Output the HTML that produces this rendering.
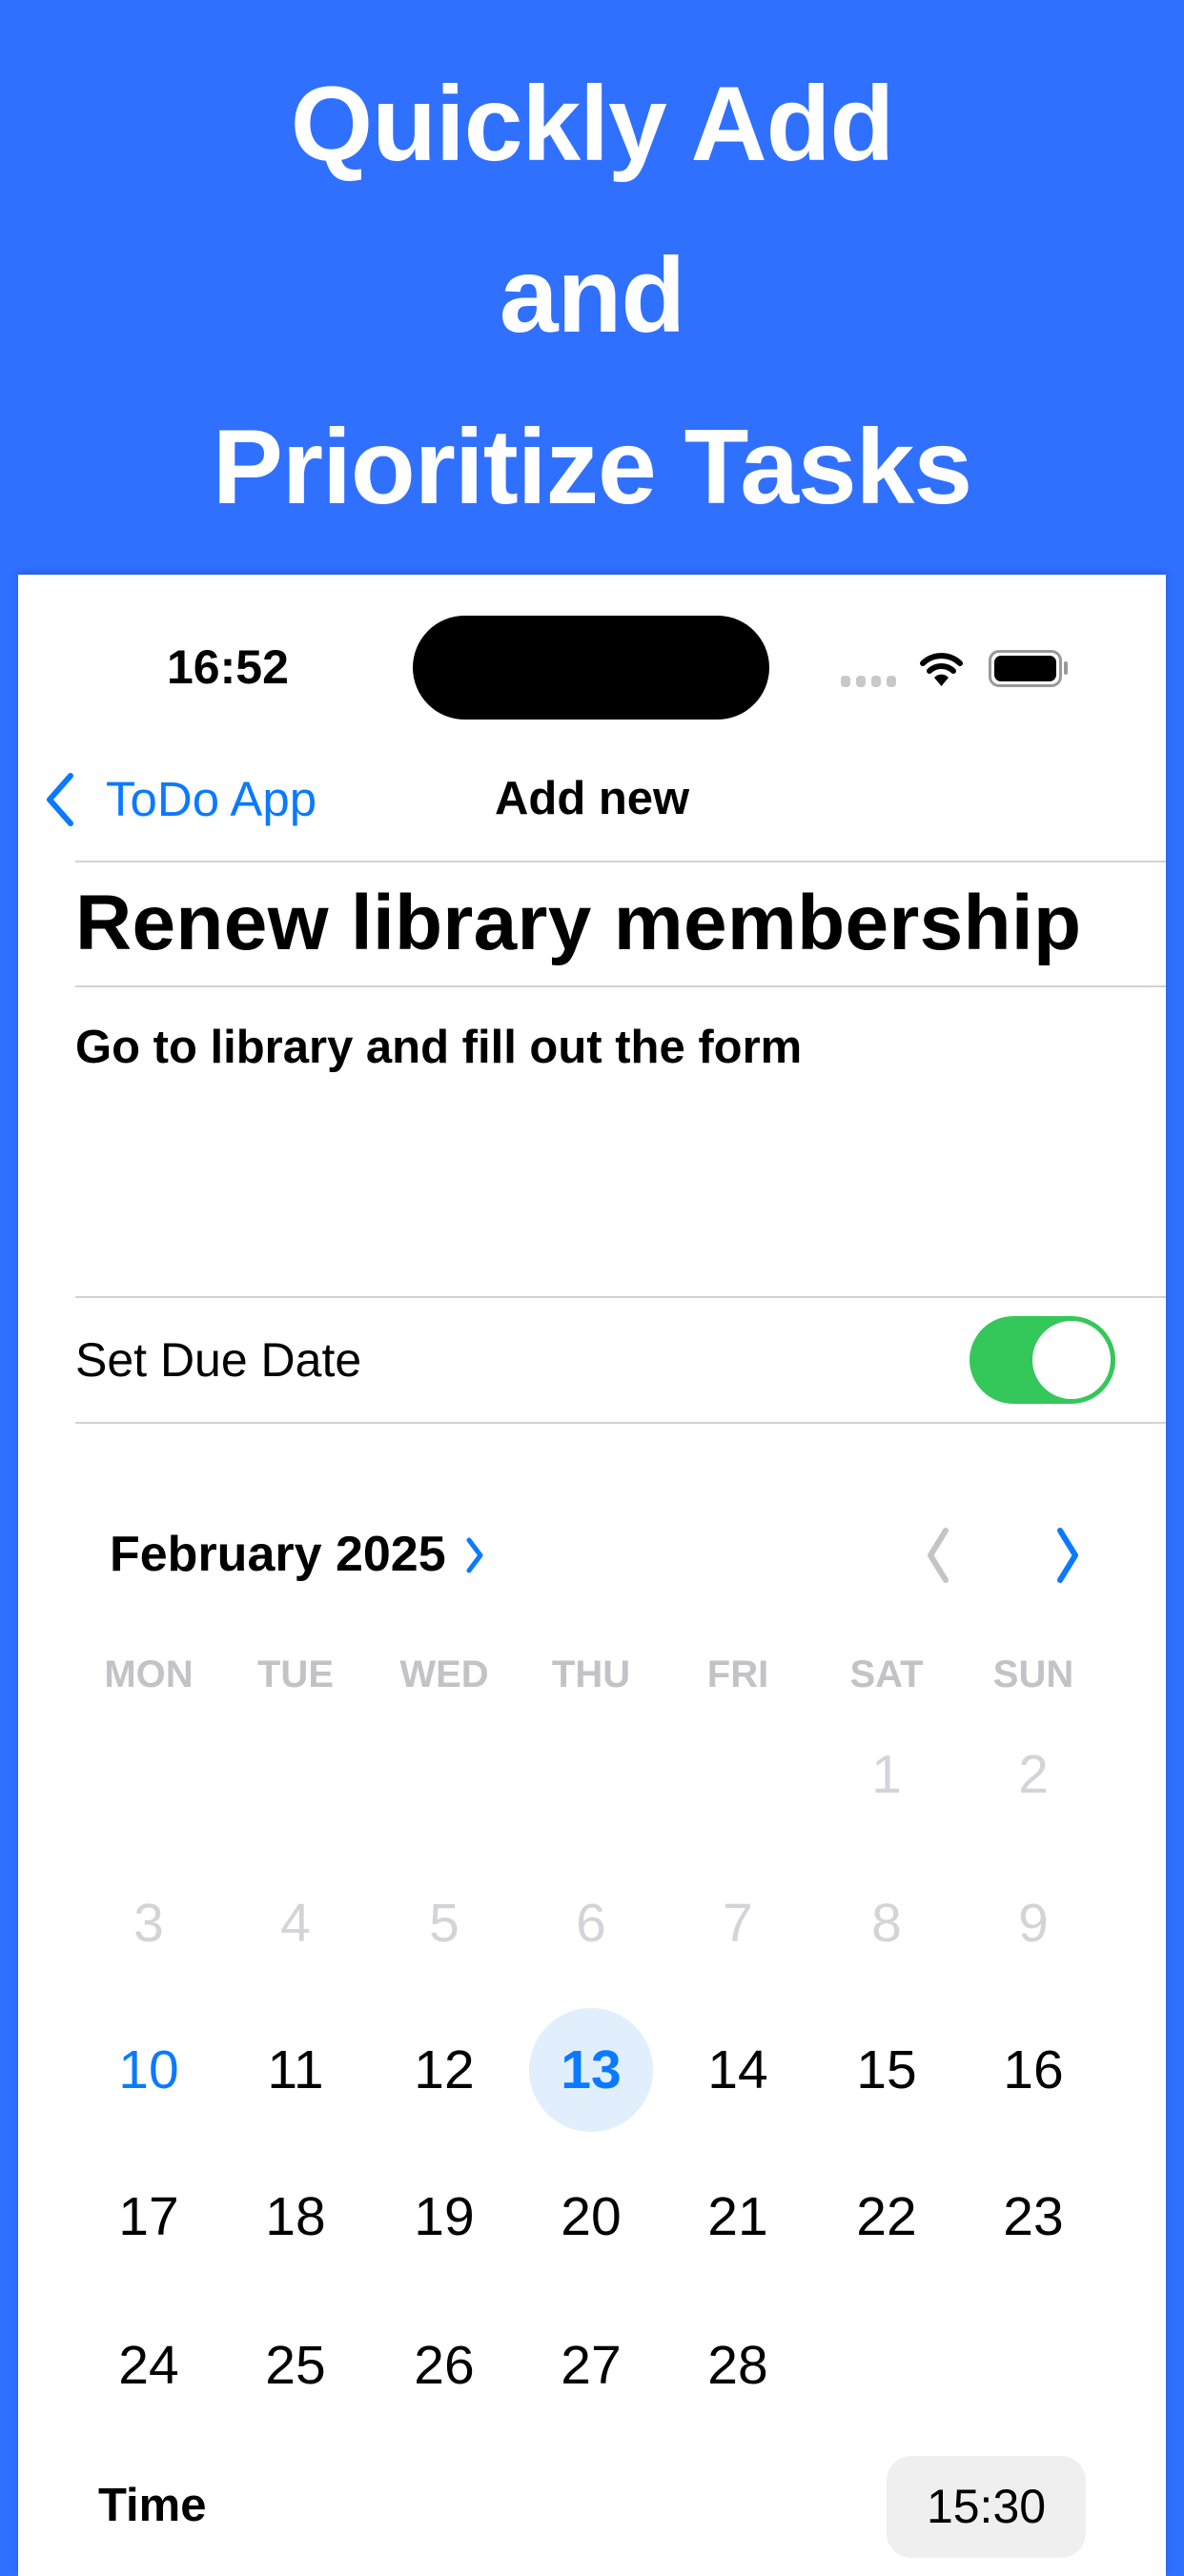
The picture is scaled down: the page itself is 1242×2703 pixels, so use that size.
<!DOCTYPE html>
<html><head><meta charset="utf-8"><style>
*{margin:0;padding:0;box-sizing:border-box}
body{width:1242px;height:2688px;background:#3070FF;position:relative;overflow:hidden;font-family:"Liberation Sans",sans-serif}
.a{position:absolute;white-space:nowrap}
.h{left:0;width:1242px;text-align:center;color:#fff;font-size:111px;font-weight:700;letter-spacing:-1px}
.panel{position:absolute;left:19px;top:603px;width:1204px;height:2100px;background:#fff;box-shadow:0 -3px 6px rgba(0,0,0,.15)}
.line{position:absolute;left:79px;right:19px;height:2px;background:#d2d2d6}
.wd{font-size:40px;color:#c3c3c7;font-weight:700;width:154px;text-align:center;transform:translate(-77px,0)}
.d{font-size:57px;width:154px;text-align:center;transform:translate(-77px,0);color:#000}
.g{color:#d4d4d8}
</style></head><body>
<div class="a h" style="top:66px">Quickly Add</div>
<div class="a h" style="top:246px">and</div>
<div class="a h" style="top:426px">Prioritize Tasks</div>
<div class="panel"></div>
<div class="a" style="left:175px;top:671px;font-size:50px;font-weight:700">16:52</div>
<div class="a" style="left:433px;top:646px;width:374px;height:109px;border-radius:55px;background:#000"></div>
<div class="a" style="left:882px;top:709px;width:60px;height:12px">
<span style="position:absolute;left:0;width:10px;height:12px;border-radius:4px;background:#c8c8c8"></span><span style="position:absolute;left:16px;width:10px;height:12px;border-radius:4px;background:#c8c8c8"></span><span style="position:absolute;left:32px;width:10px;height:12px;border-radius:4px;background:#c8c8c8"></span><span style="position:absolute;left:48px;width:10px;height:12px;border-radius:4px;background:#c8c8c8"></span></div>
<svg class="a" style="left:965px;top:682px" width="45" height="40" viewBox="0 0 45 40"><path d="M3 14 A28 28 0 0 1 42 14" stroke="#000" stroke-width="6" fill="none" stroke-linecap="round"/><path d="M10 22 A18 18 0 0 1 35 22" stroke="#000" stroke-width="6" fill="none" stroke-linecap="round"/><path d="M22.5 38 L15 29 A10 10 0 0 1 30 29 Z" fill="#000"/></svg>
<div class="a" style="left:1037px;top:682px;width:77px;height:39px;border:3px solid #999;border-radius:11px;padding:3px"><div style="width:100%;height:100%;background:#000;border-radius:7px"></div></div>
<div class="a" style="left:1116px;top:694px;width:4px;height:14px;background:#999;border-radius:2px"></div>
<svg class="a" style="left:44px;top:810px" width="36" height="58" viewBox="0 0 36 58"><path d="M30 4 L8 29 L30 54" stroke="#0a7aff" stroke-width="6" fill="none" stroke-linecap="round" stroke-linejoin="round"/></svg>
<div class="a" style="left:111px;top:809px;font-size:51px;color:#0a7aff">ToDo App</div>
<div class="a" style="left:519px;top:810px;font-size:49px;font-weight:700">Add new</div>
<div class="line" style="top:903px"></div>
<div class="a" style="left:79px;top:922px;font-size:82px;font-weight:700;letter-spacing:0.3px">Renew library membership</div>
<div class="line" style="top:1034px"></div>
<div class="a" style="left:79px;top:1071px;font-size:49px;font-weight:700">Go to library and fill out the form</div>
<div class="line" style="top:1360px"></div>
<div class="a" style="left:79px;top:1398px;font-size:50px">Set Due Date</div>
<div class="a" style="left:1017px;top:1381px;width:153px;height:92px;border-radius:46px;background:#34C759"><div style="position:absolute;right:5px;top:5px;width:82px;height:82px;border-radius:50%;background:#fff"></div></div>
<div class="line" style="top:1492px"></div>
<div class="a" style="left:115px;top:1601px;font-size:52px;font-weight:700">February 2025</div>
<svg class="a" style="left:484px;top:1610px" width="28" height="44" viewBox="0 0 28 44"><path d="M8 6 L20 22 L8 38" stroke="#0a7aff" stroke-width="5" fill="none" stroke-linecap="round" stroke-linejoin="round"/></svg>
<svg class="a" style="left:962px;top:1600px" width="44" height="64" viewBox="0 0 44 64"><path d="M30 6 L14 32 L30 58" stroke="#c4c4c6" stroke-width="6" fill="none" stroke-linecap="round" stroke-linejoin="round"/></svg>
<svg class="a" style="left:1098px;top:1600px" width="44" height="64" viewBox="0 0 44 64"><path d="M14 6 L30 32 L14 58" stroke="#0a7aff" stroke-width="6" fill="none" stroke-linecap="round" stroke-linejoin="round"/></svg>
<div class="a wd" style="left:156px;top:1735px">MON</div>
<div class="a wd" style="left:310px;top:1735px">TUE</div>
<div class="a wd" style="left:466px;top:1735px">WED</div>
<div class="a wd" style="left:620px;top:1735px">THU</div>
<div class="a wd" style="left:774px;top:1735px">FRI</div>
<div class="a wd" style="left:930px;top:1735px">SAT</div>
<div class="a wd" style="left:1084px;top:1735px">SUN</div>
<div class="a d g" style="left:930px;top:1829px">1</div>
<div class="a d g" style="left:1084px;top:1829px">2</div>
<div class="a d g" style="left:156px;top:1985px">3</div>
<div class="a d g" style="left:310px;top:1985px">4</div>
<div class="a d g" style="left:466px;top:1985px">5</div>
<div class="a d g" style="left:620px;top:1985px">6</div>
<div class="a d g" style="left:774px;top:1985px">7</div>
<div class="a d g" style="left:930px;top:1985px">8</div>
<div class="a d g" style="left:1084px;top:1985px">9</div>
<div class="a" style="left:555px;top:2107px;width:130px;height:130px;border-radius:50%;background:#E1EEFC"></div>
<div class="a d" style="left:156px;top:2139px;color:#0a7aff">10</div>
<div class="a d" style="left:310px;top:2139px">11</div>
<div class="a d" style="left:466px;top:2139px">12</div>
<div class="a d" style="left:620px;top:2139px;color:#0a7aff;font-weight:700">13</div>
<div class="a d" style="left:774px;top:2139px">14</div>
<div class="a d" style="left:930px;top:2139px">15</div>
<div class="a d" style="left:1084px;top:2139px">16</div>
<div class="a d" style="left:156px;top:2293px">17</div>
<div class="a d" style="left:310px;top:2293px">18</div>
<div class="a d" style="left:466px;top:2293px">19</div>
<div class="a d" style="left:620px;top:2293px">20</div>
<div class="a d" style="left:774px;top:2293px">21</div>
<div class="a d" style="left:930px;top:2293px">22</div>
<div class="a d" style="left:1084px;top:2293px">23</div>
<div class="a d" style="left:156px;top:2449px">24</div>
<div class="a d" style="left:310px;top:2449px">25</div>
<div class="a d" style="left:466px;top:2449px">26</div>
<div class="a d" style="left:620px;top:2449px">27</div>
<div class="a d" style="left:774px;top:2449px">28</div>
<div class="a" style="left:103px;top:2601px;font-size:49px;font-weight:700">Time</div>
<div class="a" style="left:930px;top:2577px;width:209px;height:107px;border-radius:26px;background:#EFEFF0;text-align:center;line-height:107px;font-size:50px">15:30</div>
</body></html>
